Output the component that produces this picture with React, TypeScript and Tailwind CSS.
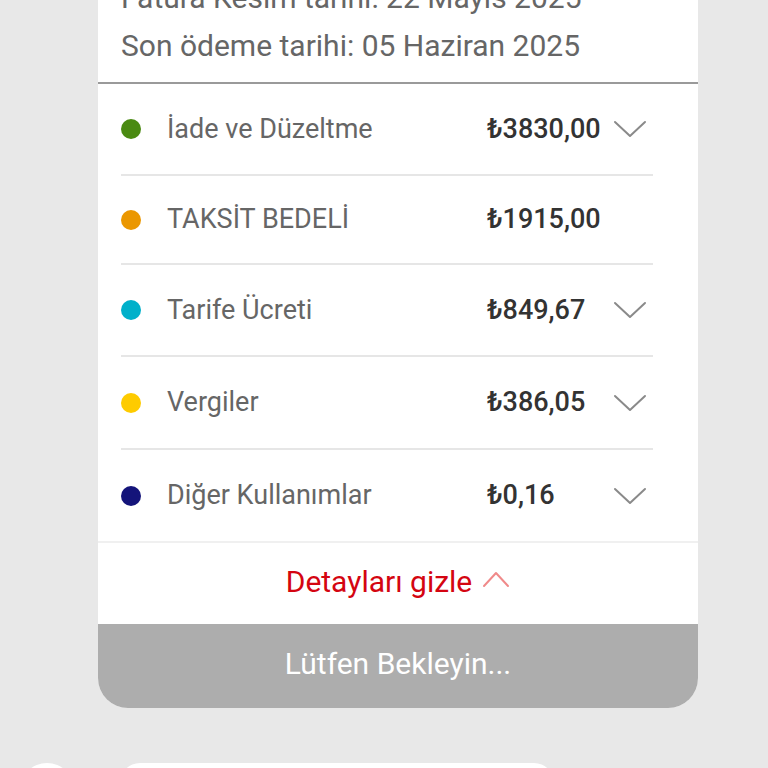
import React from 'react'

const rows = [
  { color: '#4a8a12', label: 'İade ve Düzeltme', amount: '₺3830,00', chevron: true, h: 'h-[92px]' },
  { color: '#eb9700', label: 'TAKSİT BEDELİ', amount: '₺1915,00', chevron: false, h: 'h-[89px]' },
  { color: '#00b0ca', label: 'Tarife Ücreti', amount: '₺849,67', chevron: true, h: 'h-[92px]' },
  { color: '#fecb00', label: 'Vergiler', amount: '₺386,05', chevron: true, h: 'h-[93px]' },
  { color: '#14147a', label: 'Diğer Kullanımlar', amount: '₺0,16', chevron: true, h: 'h-[91px]' },
]

const ChevronDown = ({ color }: { color: string }) => (
  <svg width="34" height="18" viewBox="0 0 34 18" fill="none">
    <path d="M2 2 L17 16 L32 2" stroke={color} strokeWidth="2" strokeLinecap="round" strokeLinejoin="round" />
  </svg>
)

const ChevronUp = ({ color }: { color: string }) => (
  <svg width="28" height="18" viewBox="0 0 28 18" fill="none">
    <path d="M2 16 L14 3 L26 16" stroke={color} strokeWidth="2" strokeLinecap="round" strokeLinejoin="round" />
  </svg>
)

const App: React.FC = () => {
  return (
    <div
      className="h-[768px] w-[768px] overflow-hidden bg-[#e8e8e8]"
      style={{ fontFamily: 'Roboto, "Noto Sans", sans-serif' }}
    >
      <div className="ml-[98px] w-[600px] -mt-[40px] bg-white rounded-b-[30px] overflow-hidden">
        {/* Header */}
        <div className="px-[23px] pt-[14px] pb-[12px] border-b-2 border-[#9a9a9a] text-[30px] text-[#666666] leading-[48px]">
          <p>Fatura Kesim tarihi: 22 Mayıs 2025</p>
          <p>Son ödeme tarihi: 05 Haziran 2025</p>
        </div>

        {/* Rows */}
        <div className="pl-[23px] pr-[45px]">
          {rows.map((r, i) => (
            <div
              key={r.label}
              className={`flex items-center ${r.h} ${i < rows.length - 1 ? 'border-b-2 border-[#e6e6e6]' : ''}`}
            >
              <span className="h-5 w-5 shrink-0 rounded-full" style={{ backgroundColor: r.color }} />
              <span className="ml-[26px] flex-1 text-[27px] text-[#666666]">{r.label}</span>
              <span className="w-[126px] text-[27px] font-medium text-[#333333]">{r.amount}</span>
              <span className="mr-[6px] flex w-[34px] items-center">
                {r.chevron && <ChevronDown color="#8a8a8a" />}
              </span>
            </div>
          ))}
        </div>

        {/* Details toggle */}
        <div className="flex h-[83px] items-center justify-center gap-[10px] border-t-2 border-[#f0f0f0] pb-[5px]">
          <span className="text-[30px] text-[#d40511]">Detayları gizle</span>
          <span className="mt-[-4px]">
            <ChevronUp color="#f08a8a" />
          </span>
        </div>

        {/* Waiting button */}
        <div className="flex h-[84px] items-center justify-center bg-[#adadad] pb-[6px] text-[30px] text-white">
          Lütfen Bekleyin...
        </div>
      </div>

      {/* Next section peeking */}
      <div className="mt-[55px] flex items-start gap-[46px] pl-[20px]">
        <div className="h-[54px] w-[54px] rounded-full bg-white" />
        <div className="h-[54px] w-[434px] rounded-[20px] bg-white" />
      </div>
    </div>
  )
}

export default App
